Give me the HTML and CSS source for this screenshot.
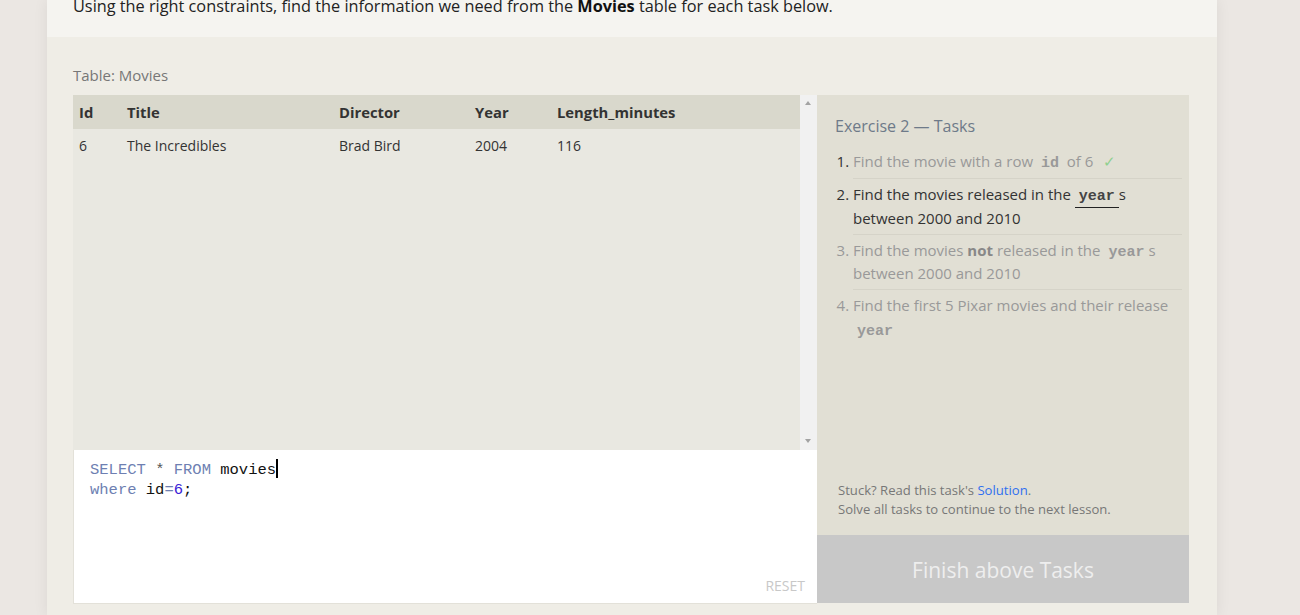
FILE: index.html
```html
<!DOCTYPE html>
<html>
<head>
<meta charset="utf-8">
<link rel="stylesheet" href="styles.css">
</head>
<body>
<div class="card">
  <div class="intro">
    <p>Using the right constraints, find the information we need from the <b>Movies</b> table for each task below.</p>
  </div>
  <div class="exercise">
    <div class="table-label">Table: Movies</div>
    <div class="workspace">
      <div class="left">
        <div class="viewer">
          <div class="results">
            <table>
              <thead>
                <tr><th class="c-id">Id</th><th class="c-title">Title</th><th class="c-dir">Director</th><th class="c-year">Year</th><th>Length_minutes</th></tr>
              </thead>
              <tbody>
                <tr><td>6</td><td>The Incredibles</td><td>Brad Bird</td><td>2004</td><td>116</td></tr>
              </tbody>
            </table>
          </div>
          <div class="scrollbar">
            <span class="arrow up"></span>
            <span class="arrow down"></span>
          </div>
        </div>
        <div class="editor">
          <div class="code"><span class="kw">SELECT</span> <span class="op">*</span> <span class="kw">FROM</span> movies<span class="cursor"></span></div>
          <div class="code"><span class="kw">where</span> id<span class="kw">=</span><span class="num">6</span>;</div>
          <div class="reset">RESET</div>
        </div>
      </div>
      <div class="right">
        <div class="tasks">
          <h3>Exercise 2 — Tasks</h3>
          <ol>
            <li class="done">Find the movie with a row <code>id</code> of 6 <span class="check">✓</span></li>
            <li class="active">Find the movies released in the <code class="ul">year</code>s between 2000 and 2010</li>
            <li class="todo">Find the movies <b>not</b> released in the <code>year</code>s between 2000 and 2010</li>
            <li class="todo">Find the first 5 Pixar movies and their release <code>year</code></li>
          </ol>
          <div class="spacer"></div>
          <p class="help">Stuck? Read this task's <a href="#">Solution</a>.<br>Solve all tasks to continue to the next lesson.</p>
        </div>
        <div class="finish">Finish above Tasks</div>
      </div>
    </div>
  </div>
</div>
</body>
</html>
```

FILE: styles.css
```css
html, body {
  margin: 0;
  padding: 0;
}
body {
  background: #ebe7e3;
  font-family: "Open Sans", "Noto Sans", sans-serif;
  height: 615px;
  overflow: hidden;
}
.card {
  margin-left: 47px;
  width: 1170px;
  box-shadow: 0 0 14px rgba(0, 0, 0, 0.07);
  background: #efede6;
  min-height: 615px;
}
.intro {
  background: #f5f4f0;
  height: 37px;
  padding: 0 26px;
  overflow: hidden;
}
.intro p {
  margin: -6px 0 0 0;
  font-size: 16.3px;
  line-height: 24px;
  color: #222;
}
.intro b {
  font-weight: 700;
  color: #111;
}
.exercise {
  padding: 27px 28px 12px 26px;
}
.table-label {
  font-size: 15px;
  line-height: 22px;
  color: #777;
  margin-bottom: 9px;
}
.workspace {
  display: flex;
}
.left {
  width: 744px;
  display: flex;
  flex-direction: column;
}
.viewer {
  height: 355px;
  display: flex;
  background: #e9e8e1;
}
.results {
  flex: 1;
}
table {
  border-collapse: collapse;
  width: 100%;
  font-size: 14px;
  color: #333;
}
thead tr {
  background: #d9d8cc;
  height: 34px;
}
th {
  text-align: left;
  font-weight: 700;
  font-size: 14.8px;
  color: #333;
  padding: 0 0 0 6px;
}
td {
  padding: 0 0 0 6px;
  height: 32px;
}
.c-id { width: 42px; }
.c-title { width: 206px; }
.c-dir { width: 130px; }
.c-year { width: 76px; }
.scrollbar {
  width: 17px;
  background: #f1f1f1;
  position: relative;
}
.arrow {
  position: absolute;
  left: 5px;
  width: 0;
  height: 0;
  border-left: 3.5px solid transparent;
  border-right: 3.5px solid transparent;
}
.arrow.up {
  top: 6px;
  border-bottom: 4px solid #a3a3a3;
}
.arrow.down {
  bottom: 7px;
  border-top: 4px solid #a3a3a3;
}
.editor {
  height: 154px;
  background: #fff;
  border-left: 1px solid #e3e1d9;
  border-bottom: 1px solid #e3e1d9;
  padding: 9px 0 0 16px;
  box-sizing: border-box;
  position: relative;
}
.code {
  font-family: "Liberation Mono", "DejaVu Sans Mono", monospace;
  font-size: 15.5px;
  line-height: 20px;
  color: #111;
  white-space: pre;
}
.kw { color: #6e7fb2; }
.op { color: #555; }
.num { color: #3a22d6; }
.cursor {
  display: inline-block;
  width: 2px;
  height: 19px;
  background: #000;
  vertical-align: -4px;
}
.reset {
  position: absolute;
  right: 12px;
  bottom: 8px;
  font-size: 14px;
  color: #c8c8c8;
}
.right {
  width: 372px;
  display: flex;
  flex-direction: column;
}
.tasks {
  height: 440px;
  background: #e1dfd4;
  padding: 19px 7px 16px 18px;
  box-sizing: border-box;
  display: flex;
  flex-direction: column;
}
.tasks h3 {
  margin: 0;
  font-size: 16px;
  font-weight: 400;
  line-height: 24px;
  color: #6e7a89;
}
ol {
  margin: 8px 0 0 0;
  padding: 0 0 0 18px;
  font-size: 15px;
  line-height: 23.5px;
}
li {
  padding: 4px 0 3.5px 0;
  border-bottom: 1px solid #d5d3c8;
  color: #999;
}
li.done {
  padding-bottom: 4.5px;
}
li:last-child {
  border-bottom: none;
}
li::marker {
  color: #999;
}
li.done::marker, li.active::marker {
  color: #333;
}
li.active {
  color: #333;
}
code {
  font-family: "Liberation Mono", "DejaVu Sans Mono", monospace;
  font-weight: 700;
  font-size: 15px;
  line-height: 1;
  padding: 0 4px;
  color: #999;
}
li.active code {
  color: #444;
}
code.ul {
  border-bottom: 1px solid #222;
  padding-bottom: 2px;
}
li b {
  color: #888;
}
.check {
  color: #8fd08f;
  margin-left: 6px;
}
.spacer {
  flex: 1;
}
.help {
  margin: 0 0 0 3px;
  font-size: 13.1px;
  line-height: 19px;
  color: #777;
}
.help a {
  color: #2f6ff0;
  text-decoration: none;
}
.finish {
  height: 68px;
  background: #c8c8c8;
  color: #eee;
  font-size: 21px;
  padding-top: 2px;
  box-sizing: border-box;
  display: flex;
  align-items: center;
  justify-content: center;
}
```
